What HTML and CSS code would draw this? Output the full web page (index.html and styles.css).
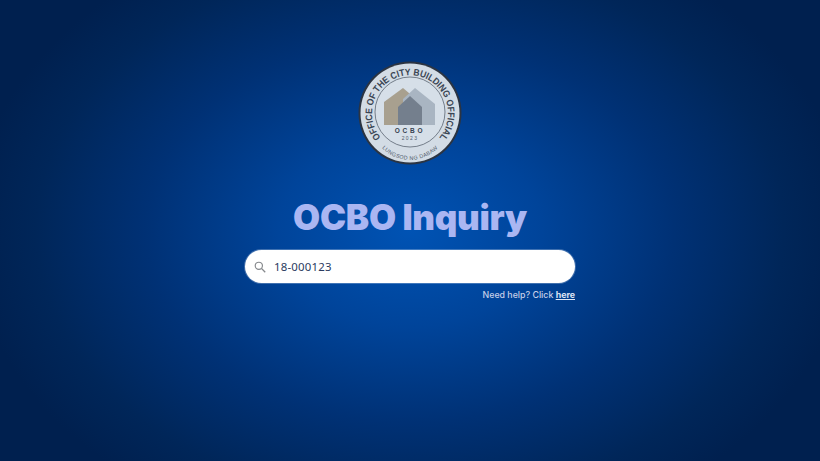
FILE: index.html
```html
<!DOCTYPE html>
<html lang="en">
<head>
    <meta charset="UTF-8">
    <meta name="viewport" content="width=device-width, initial-scale=1.0">
    <title>OCBO Inquiry</title>
    <link rel="stylesheet" href="styles.css">
</head>
<body>
    <div class="inquiry-container">
        <svg class="seal" viewBox="0 0 104 104" role="img" aria-label="Office of the City Building Official seal">
            <defs>
                <path id="seal-top" d="M 25 79 A 38 38 0 1 1 79 79"/>
                <path id="seal-bottom" d="M 24 87 A 39 39 0 0 0 80 87"/>
            </defs>
            <circle cx="52" cy="52" r="51.5" fill="#2b3442"/>
            <circle cx="52" cy="52" r="49.5" fill="#d3dce5"/>
            <circle cx="52" cy="51" r="35" fill="#d6dfe8" stroke="#4a5562" stroke-width="0.7"/>
            <text class="seal-ring"><textPath href="#seal-top" startOffset="50%" text-anchor="middle" textLength="172" lengthAdjust="spacingAndGlyphs">OFFICE OF THE CITY BUILDING OFFICIAL</textPath></text>
            <text class="seal-lower"><textPath href="#seal-bottom" startOffset="50%" text-anchor="middle">LUNGSOD NG DABAW</textPath></text>
            <polygon points="26,64 26,41 45,27 58,38 58,64" fill="#a8a08f"/>
            <polygon points="45,38 57,27 77,43 77,64 45,64" fill="#a9b5c2"/>
            <polygon points="40,64 40,46 52,35 64,46 64,64" fill="#747f8d"/>
            <text class="seal-ocbo" x="52" y="72" text-anchor="middle">OCBO</text>
            <text class="seal-year" x="52" y="79" text-anchor="middle">2023</text>
        </svg>

        <h1 class="title">OCBO Inquiry</h1>

        <div class="search-box">
            <svg class="search-icon" viewBox="0 0 24 24">
                <circle cx="10" cy="10" r="6.2"/>
                <line x1="14.6" y1="14.6" x2="21" y2="21"/>
            </svg>
            <span class="search-text">18-000123</span>
        </div>

        <p class="help">Need help? Click <a href="#">here</a></p>
    </div>
</body>
</html>
```

FILE: styles.css
```css
html, body {
    height: 100%;
}

body {
    margin: 0;
    font-family: "Open Sans", Arial, sans-serif;
    background: radial-gradient(ellipse 440px 320px at 50% 50%, #0053b4 0%, #00449a 30%, #003175 60%, #002659 85%, #00204f 100%);
    background-color: #00204f;
}

.inquiry-container {
    width: 330px;
    margin: 0 auto;
    padding-top: 61px;
    display: flex;
    flex-direction: column;
    align-items: center;
}

.seal {
    width: 104px;
    height: 104px;
    display: block;
}

.seal-ring {
    font-family: "Liberation Sans", Arial, sans-serif;
    font-size: 9.5px;
    font-weight: 700;
    fill: #3a4553;
}

.seal-lower {
    font-family: "Liberation Sans", Arial, sans-serif;
    font-size: 5.4px;
    letter-spacing: 0.3px;
    fill: #4e5a68;
}

.seal-ocbo {
    font-family: "Liberation Sans", Arial, sans-serif;
    font-size: 6.5px;
    font-weight: 700;
    letter-spacing: 2.8px;
    fill: #36414f;
}

.seal-year {
    font-family: "Liberation Sans", Arial, sans-serif;
    font-size: 5px;
    letter-spacing: 1.4px;
    fill: #4e5a68;
}

.title {
    margin: 31px 0 0;
    font-family: Inter, Arial, sans-serif;
    font-size: 35px;
    line-height: 42px;
    font-weight: 900;
    letter-spacing: -0.3px;
    color: #aab6f2;
}

.search-box {
    width: 100%;
    height: 33px;
    margin-top: 12px;
    box-sizing: border-box;
    padding: 0 12px 0 8px;
    display: flex;
    align-items: center;
    gap: 7px;
    background-color: #fff;
    border-radius: 17px;
    box-shadow: 0 0 0 1px rgba(255, 255, 255, 0.25);
}

.search-icon {
    width: 14px;
    height: 14px;
    fill: none;
    stroke: #85888c;
    stroke-width: 2;
}

.search-text {
    font-family: "Noto Sans", Arial, sans-serif;
    font-size: 11.4px;
    letter-spacing: 0.2px;
    color: #2a3a5e;
}

.help {
    width: 100%;
    margin: 6px 0 0;
    text-align: right;
    font-family: Inter, Arial, sans-serif;
    font-size: 8.8px;
    line-height: 12px;
    font-weight: 500;
    color: #c5cfe8;
}

.help a {
    color: #dde4f5;
    font-weight: 700;
}
```
